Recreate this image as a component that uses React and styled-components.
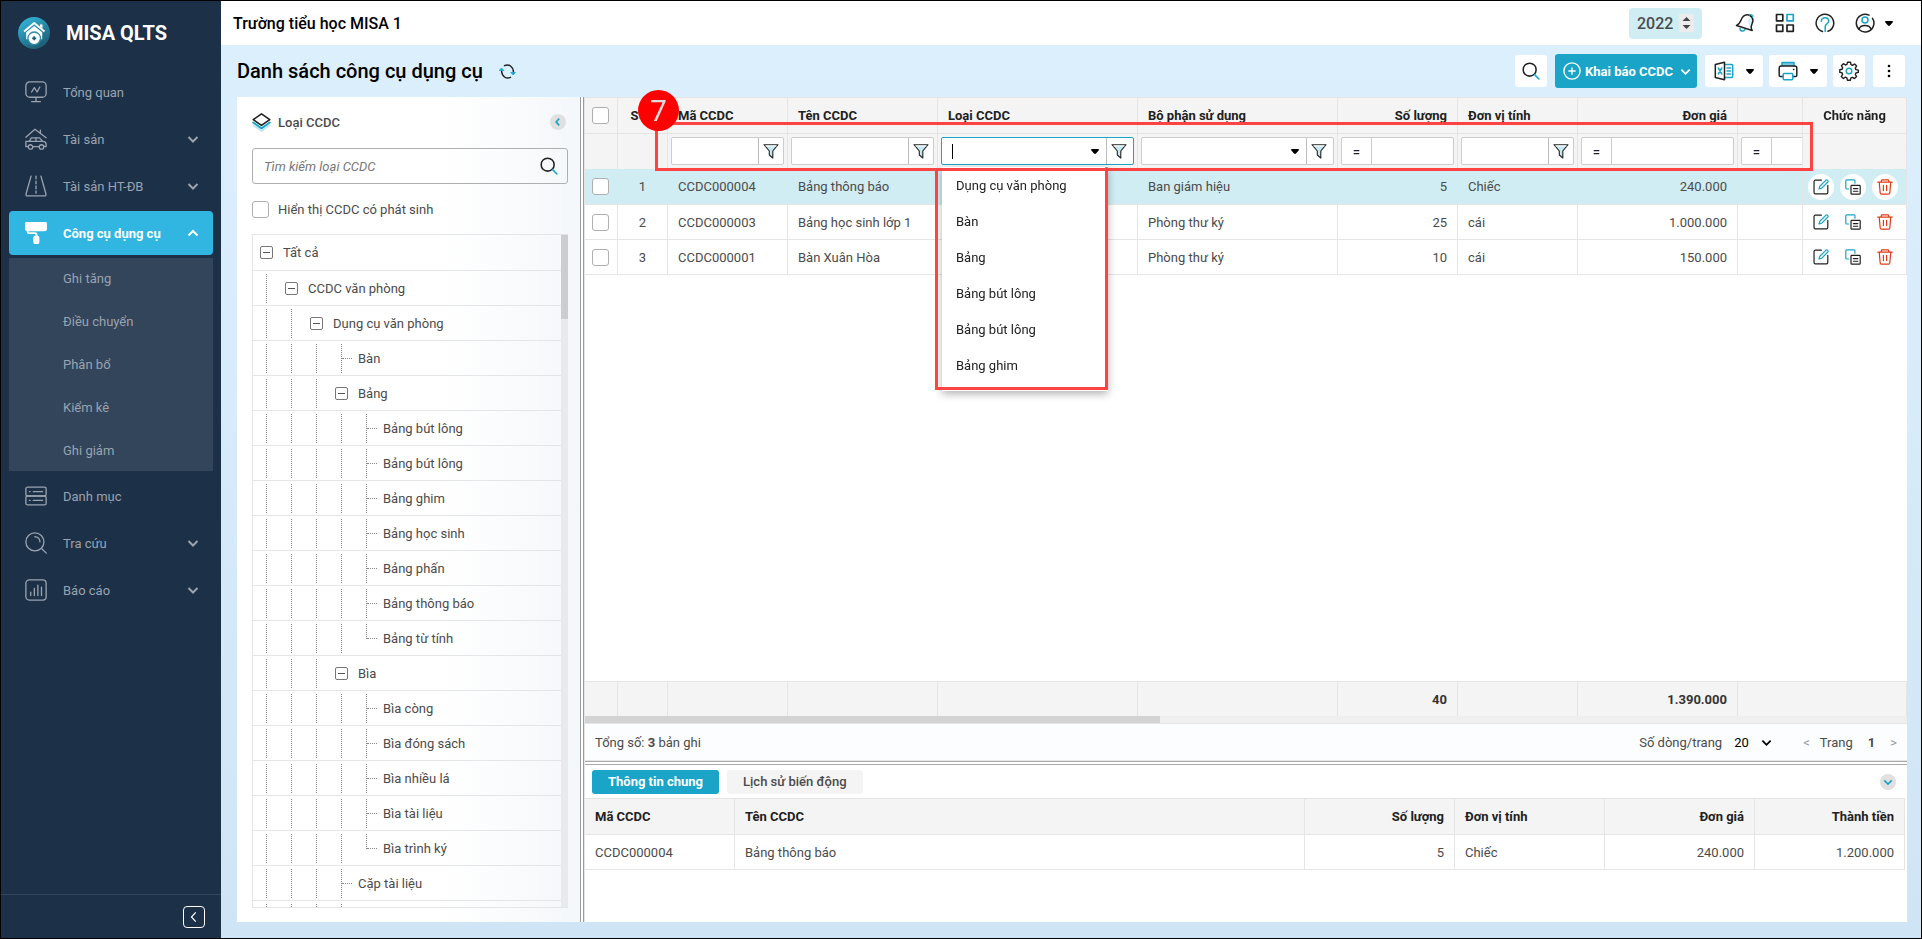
import React, { useState } from 'react';
import styled, { createGlobalStyle, css } from 'styled-components';

const teal = '#1aa4c8';
const dark = '#212121';

const MENU_TOP = [
  { label: 'Tổng quan', icon: 'monitor' },
  { label: 'Tài sản', icon: 'car', expandable: true },
  { label: 'Tài sản HT-ĐB', icon: 'road', expandable: true },
  { label: 'Công cụ dụng cụ', icon: 'roller', expandable: true, active: true },
];

const SUB_MENU = ['Ghi tăng', 'Điều chuyển', 'Phân bổ', 'Kiểm kê', 'Ghi giảm'];

const MENU_BOTTOM = [
  { label: 'Danh mục', icon: 'server' },
  { label: 'Tra cứu', icon: 'lookup', expandable: true },
  { label: 'Báo cáo', icon: 'report', expandable: true },
];

const TREE = [
  { label: 'Tất cả', level: 0, branch: true },
  { label: 'CCDC văn phòng', level: 1, branch: true },
  { label: 'Dụng cụ văn phòng', level: 2, branch: true },
  { label: 'Bàn', level: 3 },
  { label: 'Bảng', level: 3, branch: true },
  { label: 'Bảng bút lông', level: 4 },
  { label: 'Bảng bút lông', level: 4 },
  { label: 'Bảng ghim', level: 4 },
  { label: 'Bảng học sinh', level: 4 },
  { label: 'Bảng phấn', level: 4 },
  { label: 'Bảng thông báo', level: 4 },
  { label: 'Bảng từ tính', level: 4, last: true },
  { label: 'Bìa', level: 3, branch: true },
  { label: 'Bìa còng', level: 4 },
  { label: 'Bìa đóng sách', level: 4 },
  { label: 'Bìa nhiều lá', level: 4 },
  { label: 'Bìa tài liệu', level: 4 },
  { label: 'Bìa trình ký', level: 4, last: true },
  { label: 'Cặp tài liệu', level: 3 },
  { label: '', level: 3 },
];

const ROWS = [
  { code: 'CCDC000004', name: 'Bảng thông báo', dept: 'Ban giám hiệu', qty: '5', unit: 'Chiếc', price: '240.000' },
  { code: 'CCDC000003', name: 'Bảng học sinh lớp 1', dept: 'Phòng thư ký', qty: '25', unit: 'cái', price: '1.000.000' },
  { code: 'CCDC000001', name: 'Bàn Xuân Hòa', dept: 'Phòng thư ký', qty: '10', unit: 'cái', price: '150.000' },
];

const OPTIONS = ['Dụng cụ văn phòng', 'Bàn', 'Bảng', 'Bảng bút lông', 'Bảng bút lông', 'Bảng ghim'];

const COLS = [33, 50, 120, 150, 200, 200, 120, 120, 160, 160, 104];

/* ---------- icons ---------- */

const Svg = ({ size = 20, children, ...rest }) => (
  <svg
    width={size}
    height={size}
    viewBox="0 0 20 20"
    fill="none"
    stroke="currentColor"
    strokeWidth="1.5"
    strokeLinecap="round"
    strokeLinejoin="round"
    aria-hidden="true"
    {...rest}
  >
    {children}
  </svg>
);

const menuIcons = {
  monitor: (
    <Svg size={22} strokeWidth="1.2">
      <rect x="0.8" y="0.8" width="18.4" height="14" rx="3.5" />
      <path d="M6 10l2.5-4 2.5 4L13.5 5.5M10 15v3.5M6 18.7h8" />
    </Svg>
  ),
  car: (
    <Svg size={22} strokeWidth="1.2">
      <path d="M.8 8.5L9 1.2l10.2 7.6M14 2v2.6" />
      <path d="M3.8 12.2l2-3.2h7.4l3 3.2M10 9v3.2M1.2 12.2h15c1.8 0 3 1 3 2.600v2h-2M12.5 17h-5M3 17H.8v-4.800" />
      <circle cx="5" cy="17.2" r="2" />
      <circle cx="15" cy="17.2" r="2" />
    </Svg>
  ),
  road: (
    <Svg size={22} strokeWidth="1.2">
      <path d="M5.5 1L1 17c-.3 1.3.2 2 1.2 2h15.6c1 0 1.5-.7 1.2-2L14.5 1" />
      <path d="M10 1v15.5" strokeDasharray="2.5 2" />
    </Svg>
  ),
  roller: (
    <Svg size={22} strokeWidth="1.6">
      <rect x=".5" y=".5" width="19" height="7" rx="2" fill="currentColor" />
      <path d="M2.5 7.5v1.7c0 .6.5 1 1 1H9c1 0 1.5.4 1.5 1.2v2" />
      <rect x="8.3" y="13" width="4" height="6.5" rx="1.6" fill="currentColor" />
    </Svg>
  ),
  server: (
    <Svg size={22} strokeWidth="1.2">
      <rect x=".8" y="2" width="18.4" height="8" rx="1.5" />
      <rect x=".8" y="10" width="18.4" height="8" rx="1.5" />
      <path d="M4 6h.6M7.5 6H16M4 14h.6M7.5 14H16" />
    </Svg>
  ),
  lookup: (
    <Svg size={22} strokeWidth="1.2">
      <circle cx="9" cy="9" r="8.2" />
      <path d="M9 4.3a4.7 4.7 0 0 1 4.6 4.6M15 15l4.4 4.2" />
    </Svg>
  ),
  report: (
    <Svg size={22} strokeWidth="1.2">
      <rect x=".8" y=".8" width="18.4" height="18.4" rx="3" />
      <path d="M5.2 15v-3M8.5 15V8.5M11.7 15V5.5M15 15V7.5" />
    </Svg>
  ),
};

const LogoIcon = () => (
  <svg width="32" height="32" viewBox="0 0 32 32" aria-hidden="true">
    <defs>
      <linearGradient id="logo" x1="0" y1="0" x2="0.6" y2="1">
        <stop offset="0" stopColor="#35bfe6" />
        <stop offset="1" stopColor="#1d5e73" />
      </linearGradient>
    </defs>
    <circle cx="16" cy="16" r="16" fill="url(#logo)" />
    <path d="M6 14.5L16.2 6l10.3 8.5" fill="none" stroke="#fff" strokeWidth="1.8" strokeLinejoin="round" />
    <path d="M22 7.5h2.500v4L22 9.500zM8.200 15.300l8-6.300 8 6.300v7H8.200z" fill="#fff" />
    <circle cx="16.2" cy="21.3" r="6.300" fill="#fff" stroke="#2a8ba8" strokeWidth="1.300" />
    <path d="M16.2 19.300v4M14.200 21.300h4" stroke="#1d5e73" strokeWidth="1.800" />
  </svg>
);

const Chevron = ({ dir = 'down', size = 12, color = 'currentColor', width = 2 }) => {
  const paths = {
    down: 'M1.5 4L6 8.500 10.500 4',
    up: 'M1.500 8.500L6 4l4.500 4.500',
    left: 'M7.500 2L3.800 6l3.700 4',
  };
  return (
    <svg width={size} height={size} viewBox="0 0 12 12" fill="none" stroke={color} strokeWidth={width} aria-hidden="true">
      <path d={paths[dir]} />
    </svg>
  );
};

const Caret = () => (
  <svg width="8" height="5" viewBox="0 0 8 5" aria-hidden="true">
    <path d="M.8 0h6.400q1.300.4.4 1.400L5 4.500q-1 .8-2 0L.4 1.400Q-.5.4.8 0z" fill="#000" />
  </svg>
);

const SearchIcon = ({ size = 18 }) => (
  <Svg size={size} strokeWidth="1.7">
    <circle cx="8.5" cy="8.5" r="7.2" stroke={dark} />
    <path d="M14 14l4.800 4.800" stroke={teal} />
  </Svg>
);

const RefreshIcon = () => (
  <Svg size={17} strokeWidth="1.7">
    <path d="M6.500 3.200c5-2.500 10.200 1 10.500 7.300M13.500 16.800c-5 2.500-10.200-1-10.500-7.300" stroke={dark} />
    <path d="M14.300 11.200h5l-2.500 2.600zM.7 8.800h5L3.200 6.200z" stroke={teal} fill={teal} strokeWidth="1" />
  </Svg>
);

const LayersIcon = () => (
  <Svg size={19} strokeWidth="1.7">
    <path d="M1.500 13l8.500 6 8.500-6" stroke="#bfe6f2" />
    <path d="M1.200 10l8.800 6.200 8.800-6.200" stroke={teal} strokeWidth="2" />
    <path d="M10 1L1.300 7l8.700 6 8.700-6z" stroke={dark} fill="#fff" />
  </Svg>
);

const BellIcon = () => (
  <Svg size={20}>
    <path d="M5 15.500c0 3 4 3.500 5 1" stroke={teal} />
    <path d="M12.500 7l4.500-3c1 3-1 9-1.500 13z" fill="#d5f0f8" stroke="none" />
    <path d="M1.500 12.500C5 11 5.500 8 7 5c1.700-3.300 5.500-4 8-2.500C18.500 4.600 18.300 8 17 11c-1 2.300-1.500 4 .2 6.500L1.500 12.500z" stroke={dark} />
    <path d="M14.500 2.300L16 1.400l2.300 1.200-.8 1.900" stroke={teal} strokeWidth="1" />
  </Svg>
);

const AppsIcon = () => (
  <Svg size={20} strokeWidth="1.7">
    <rect x="1.5" y="1.5" width="6.3" height="6.3" stroke={dark} />
    <rect x="12" y="1.5" width="6.3" height="6.3" stroke={teal} />
    <rect x="1.5" y="12" width="6.3" height="6.3" stroke={dark} />
    <rect x="12" y="12" width="6.3" height="6.3" stroke={dark} />
  </Svg>
);

const HelpIcon = () => (
  <Svg size={20}>
    <path d="M7.500 18.500A8.800 8.800 0 1 1 13 18.300" stroke={dark} />
    <path d="M6.300 8.300c0-5 7.400-4.500 7.400-.3 0 3-3.500 2.800-3.500 5.500v5" stroke={teal} />
  </Svg>
);

const UserIcon = () => (
  <Svg size={20}>
    <path d="M14 2.200A8.800 8.800 0 1 0 17.500 5.300" stroke={dark} />
    <circle cx="10" cy="7" r="3" stroke={teal} />
    <path d="M4 16.200c1.500-5 10.500-5 12 0" stroke={dark} />
  </Svg>
);

const PlusCircle = () => (
  <Svg size={18} stroke="#fff">
    <circle cx="10" cy="10" r="9" />
    <path d="M10 6.500v7M6.500 10h7" />
  </Svg>
);

const ExcelIcon = () => (
  <Svg size={20}>
    <path d="M11 3.500h6.500c.8 0 1.200.4 1.200 1.200v10.600c0 .8-.4 1.200-1.200 1.200H11M13 7h3.500M13 10h3.500M13 13h3.500" stroke={teal} />
    <path d="M1.300 3.500L10.500 1.200v17.600L1.300 16.500z" stroke={dark} />
    <path d="M4.300 7l3.500 6M7.800 7l-3.500 6" stroke={teal} />
  </Svg>
);

const PrintIcon = () => (
  <Svg size={20}>
    <path d="M4 5V1.500h12V5" stroke={teal} fill="#7cc8dd" />
    <path d="M5 15.500H2.500c-.8 0-1.300-.5-1.300-1.300V7c0-1.200.8-2 2-2h13.600c1.200 0 2 .8 2 2v7.200c0 .8-.5 1.300-1.300 1.300H15M15.500 8.500h.3" stroke={dark} />
    <rect x="5.2" y="12.5" width="9.6" height="6.3" rx="1" stroke={teal} fill="#fff" />
  </Svg>
);

const GearIcon = () => (
  <Svg size={20} strokeWidth="1.4">
    <path
      d="M8.500 1.200h3l.5 2.400 1.500.7 2.100-1.300 2 2-1.300 2.200.6 1.400 2.400.5v2.300l-2.400.6-.6 1.500 1.300 2.100-2.100 2-2-1.300-1.600.6-.5 2.300h-3l-.5-2.300-1.500-.7L4.300 17.500l-2-2 1.300-2.200L3 11.800.8 11.400V8.800L3.100 8.300l.6-1.500L2.400 4.700l2-2 2.100 1.300 1.500-.6z"
      stroke={dark}
    />
    <circle cx="10" cy="10" r="2.8" stroke={teal} />
  </Svg>
);

const FunnelIcon = () => (
  <svg width="16" height="16" viewBox="0 0 16 16" strokeLinejoin="round" aria-hidden="true">
    <path d="M2.500 2.500L6.700 8v4l3 2.700V8l4-5.500z" fill="#c5e8f2" />
    <path d="M1 1.700h14L9.800 8v7L6.300 12V8z" fill="none" stroke={dark} strokeWidth="1.1" />
    <path d="M2.500 3h11" stroke="#fff" />
  </svg>
);

const EditIcon = () => (
  <Svg size={16} strokeWidth="1.5">
    <path d="M10.500 1.500H3c-1 0-1.700.7-1.700 1.700v13.600c0 1 .7 1.700 1.700 1.700h14c1 0 1.500-.7 1.500-1.700V8" stroke={dark} />
    <path d="M7.500 12.500l1-3.500 7.800-7.600c1.500-1 3.300.9 2.300 2.300L11 11.500z" stroke={teal} />
  </Svg>
);

const CopyIcon = () => (
  <Svg size={16} strokeWidth="1.5">
    <path d="M4.500 12.500H2.200c-.8 0-1.200-.4-1.200-1.200V2.200C1 1.400 1.400 1 2.200 1h9c.8 0 1.200.4 1.200 1.200v3" stroke={teal} />
    <rect x="7.5" y="8" width="11.5" height="11" rx="1" stroke={dark} />
    <path d="M10.500 12H16M10.500 15.300H16" stroke={dark} />
  </Svg>
);

const TrashIcon = () => (
  <Svg size={16} stroke="#e03a14" strokeWidth="1.5">
    <path d="M1 4h18M5 4l.8-2.800h8.400L15 4M2.800 4L4 17.500c.1.800.6 1.300 1.400 1.300h9.200c.8 0 1.300-.5 1.400-1.300L17.200 4M8 8v6.500M12 8v6.500" />
  </Svg>
);

/* ---------- page ---------- */

const NavEntry = ({ item }) => (
  <NavItem type="button" $active={item.active} aria-expanded={item.expandable ? !!item.active : undefined}>
    {menuIcons[item.icon]}
    <span>{item.label}</span>
    {item.expandable && <Chevron dir={item.active ? 'up' : 'down'} />}
  </NavItem>
);

const TreeItem = ({ node }) => (
  <TreeRow role="treeitem" aria-level={node.level + 1}>
    {Array.from({ length: node.level }, (_, i) => (
      <Guide key={i} />
    ))}
    {node.branch ? <Toggle type="button" aria-label={`Thu gọn ${node.label}`} /> : <Connector $last={node.last} />}
    <span>{node.label}</span>
  </TreeRow>
);

const TextFilter = ({ label, combo, focused, children }) => (
  <FilterBox $focused={focused}>
    {focused && <TextCursor />}
    <input type="text" aria-label={label} />
    {combo && (
      <ComboArrow type="button" aria-label={`Mở danh sách ${label}`}>
        <Caret />
      </ComboArrow>
    )}
    <FilterButton type="button" $wide={combo} aria-label={`Lọc ${label}`}>
      <FunnelIcon />
    </FilterButton>
    {children}
  </FilterBox>
);

const NumberFilter = ({ label }) => (
  <FilterBox>
    <Operator type="button" aria-label={`Điều kiện ${label}`}>=</Operator>
    <input type="text" aria-label={label} />
  </FilterBox>
);

const ColGroup = () => (
  <colgroup>
    {COLS.map((w, i) => (
      <col key={i} width={w} />
    ))}
  </colgroup>
);

const App = () => {
  const [year, setYear] = useState('2022');
  const [pageSize, setPageSize] = useState('20');

  return (
    <>
      <GlobalStyle />
      <Page>
        <Sidebar>
          <Brand>
            <LogoIcon />
            MISA QLTS
          </Brand>
          <Nav>
            {MENU_TOP.map((item) => (
              <NavEntry key={item.label} item={item} />
            ))}
            <SubMenu>
              {SUB_MENU.map((label) => (
                <a href="#" key={label}>{label}</a>
              ))}
            </SubMenu>
            {MENU_BOTTOM.map((item) => (
              <NavEntry key={item.label} item={item} />
            ))}
          </Nav>
          <SidebarFooter>
            <CollapseButton type="button" aria-label="Thu gọn menu">
              <Chevron dir="left" size={14} width={1} />
            </CollapseButton>
          </SidebarFooter>
        </Sidebar>

        <Main>
          <TopBar>
            <School>Trường tiểu học MISA 1</School>
            <YearBox>
              <select aria-label="Năm" value={year} onChange={(e) => setYear(e.target.value)}>
                <option>2022</option>
                <option>2021</option>
              </select>
              <Spinner>
                <svg width="9" height="12" viewBox="0 0 9 12" aria-hidden="true">
                  <path d="M4.5 0l4 4h-8zM4.5 12l4-4h-8z" fill="#444" />
                </svg>
              </Spinner>
            </YearBox>
            <TopActions>
              <IconButton type="button" aria-label="Thông báo"><BellIcon /></IconButton>
              <IconButton type="button" aria-label="Ứng dụng"><AppsIcon /></IconButton>
              <IconButton type="button" aria-label="Trợ giúp"><HelpIcon /></IconButton>
              <IconButton type="button" aria-label="Tài khoản"><UserIcon /><Caret /></IconButton>
            </TopActions>
          </TopBar>

          <Content>
            <Toolbar>
              <h1>Danh sách công cụ dụng cụ</h1>
              <IconButton type="button" aria-label="Tải lại"><RefreshIcon /></IconButton>
              <Tools>
                <ToolButton type="button" aria-label="Tìm kiếm"><SearchIcon /></ToolButton>
                <PrimaryButton type="button">
                  <PlusCircle />
                  Khai báo CCDC
                  <Chevron size={11} />
                </PrimaryButton>
                <ToolGroup>
                  <ToolButton type="button" $wide aria-label="Xuất Excel"><ExcelIcon /><Caret /></ToolButton>
                  <ToolButton type="button" $wide aria-label="In"><PrintIcon /><Caret /></ToolButton>
                  <ToolButton type="button" aria-label="Thiết lập"><GearIcon /></ToolButton>
                </ToolGroup>
                <ToolButton type="button" aria-label="Thêm">
                  <svg width="4" height="14" viewBox="0 0 4 14" fill="#000" aria-hidden="true">
                    <circle cx="2" cy="2" r="1.3" />
                    <circle cx="2" cy="7" r="1.3" />
                    <circle cx="2" cy="12" r="1.3" />
                  </svg>
                </ToolButton>
              </Tools>
            </Toolbar>

            <Workspace>
              <TypePanel>
                <PanelHead>
                  <LayersIcon />
                  <h2>Loại CCDC</h2>
                  <RoundButton type="button" aria-label="Thu gọn">
                    <Chevron dir="left" size={10} color={teal} />
                  </RoundButton>
                </PanelHead>
                <SearchBox>
                  <input type="text" placeholder="Tìm kiếm loại CCDC" aria-label="Tìm kiếm loại CCDC" />
                  <SearchIcon />
                </SearchBox>
                <CheckLabel>
                  <Checkbox type="checkbox" />
                  Hiển thị CCDC có phát sinh
                </CheckLabel>
                <Tree>
                  <TreeRows role="tree">
                    {TREE.map((node, i) => (
                      <TreeItem key={i} node={node} />
                    ))}
                  </TreeRows>
                  <TreeScroll><i /></TreeScroll>
                </Tree>
              </TypePanel>

              <SplitV />

              <GridPanel>
                <GridSection>
                  <GridScroll>
                    <DataTable>
                      <ColGroup />
                      <thead>
                        <HeadRow>
                          <th><Checkbox type="checkbox" aria-label="Chọn tất cả" /></th>
                          <Th $align="center">STT</Th>
                          <Th>Mã CCDC</Th>
                          <Th>Tên CCDC</Th>
                          <Th>Loại CCDC</Th>
                          <Th>Bộ phận sử dụng</Th>
                          <Th $align="right">Số lượng</Th>
                          <Th>Đơn vị tính</Th>
                          <Th $align="right">Đơn giá</Th>
                          <Th />
                          <Th $align="center" className="pinned">Chức năng</Th>
                        </HeadRow>
                        <FilterRow>
                          <td />
                          <td />
                          <td><TextFilter label="Mã CCDC" /></td>
                          <td><TextFilter label="Tên CCDC" /></td>
                          <td>
                            <TextFilter label="Loại CCDC" combo focused>
                              <Dropdown role="listbox">
                                {OPTIONS.map((o, i) => (
                                  <li role="option" aria-selected="false" key={i}>{o}</li>
                                ))}
                              </Dropdown>
                            </TextFilter>
                          </td>
                          <td><TextFilter label="Bộ phận sử dụng" combo /></td>
                          <td><NumberFilter label="Số lượng" /></td>
                          <td><TextFilter label="Đơn vị tính" /></td>
                          <td><NumberFilter label="Đơn giá" /></td>
                          <td><NumberFilter label="Thành tiền" /></td>
                          <td className="pinned" />
                        </FilterRow>
                      </thead>
                      <tbody>
                        {ROWS.map((row, i) => (
                          <BodyRow key={row.code} $selected={i === 0}>
                            <td><Checkbox type="checkbox" aria-label={`Chọn ${row.code}`} /></td>
                            <Td $align="center">{i + 1}</Td>
                            <Td>{row.code}</Td>
                            <Td>{row.name}</Td>
                            <Td />
                            <Td>{row.dept}</Td>
                            <Td $align="right">{row.qty}</Td>
                            <Td>{row.unit}</Td>
                            <Td $align="right">{row.price}</Td>
                            <Td />
                            <td className="pinned">
                              <RowActions>
                                <RowAction type="button" aria-label="Sửa"><EditIcon /></RowAction>
                                <RowAction type="button" aria-label="Nhân bản"><CopyIcon /></RowAction>
                                <RowAction type="button" aria-label="Xóa"><TrashIcon /></RowAction>
                              </RowActions>
                            </td>
                          </BodyRow>
                        ))}
                      </tbody>
                    </DataTable>
                  </GridScroll>

                  <SummaryWrap>
                    <DataTable>
                      <ColGroup />
                      <tbody>
                        <SummaryRow>
                          <Td />
                          <Td />
                          <Td />
                          <Td />
                          <Td />
                          <Td />
                          <Td $align="right">40</Td>
                          <Td />
                          <Td $align="right">1.390.000</Td>
                          <Td colSpan={2} />
                        </SummaryRow>
                      </tbody>
                    </DataTable>
                  </SummaryWrap>
                  <ScrollX><i /></ScrollX>

                  <Pager>
                    <span>Tổng số: <b>3</b> bản ghi</span>
                    <PageSize>
                      Số dòng/trang
                      <select value={pageSize} onChange={(e) => setPageSize(e.target.value)}>
                        <option>20</option>
                        <option>50</option>
                      </select>
                      <Chevron size={11} color="#000" width={2} />
                    </PageSize>
                    <PageNav>
                      <button type="button" aria-label="Trang trước">&lt;</button>
                      <span>Trang</span>
                      <b>1</b>
                      <button type="button" aria-label="Trang sau">&gt;</button>
                    </PageNav>
                  </Pager>

                  <StepFrame />
                  <StepBadge>7</StepBadge>
                </GridSection>

                <SplitH />

                <Detail>
                  <Tabs>
                    <Tab type="button" $active>Thông tin chung</Tab>
                    <Tab type="button">Lịch sử biến động</Tab>
                    <RoundButton type="button" aria-label="Thu gọn chi tiết">
                      <Chevron size={10} color={teal} />
                    </RoundButton>
                  </Tabs>
                  <DetailTable>
                    <colgroup>
                      <col width="150" />
                      <col />
                      <col width="150" />
                      <col width="150" />
                      <col width="150" />
                      <col width="150" />
                    </colgroup>
                    <thead>
                      <HeadRow>
                        <Th>Mã CCDC</Th>
                        <Th>Tên CCDC</Th>
                        <Th $align="right">Số lượng</Th>
                        <Th>Đơn vị tính</Th>
                        <Th $align="right">Đơn giá</Th>
                        <Th $align="right">Thành tiền</Th>
                      </HeadRow>
                    </thead>
                    <tbody>
                      <BodyRow>
                        <Td>CCDC000004</Td>
                        <Td>Bảng thông báo</Td>
                        <Td $align="right">5</Td>
                        <Td>Chiếc</Td>
                        <Td $align="right">240.000</Td>
                        <Td $align="right">1.200.000</Td>
                      </BodyRow>
                    </tbody>
                  </DetailTable>
                </Detail>
              </GridPanel>
            </Workspace>
          </Content>
        </Main>
      </Page>
    </>
  );
};

// Styled components
const GlobalStyle = createGlobalStyle`
  *, *::before, *::after {
    box-sizing: border-box;
  }

  body {
    margin: 0;
    font-family: Roboto, "Liberation Sans", sans-serif;
    font-size: 13px;
    color: #4b4b4b;
  }

  button, input, select {
    font: inherit;
    color: inherit;
    margin: 0;
  }

  button {
    padding: 0;
    border: none;
    background: none;
    cursor: pointer;
  }

  svg {
    display: block;
    flex: none;
  }
`;

const Page = styled.div`
  display: flex;
  height: 100vh;
  border: 1px solid #000;
  overflow: hidden;
`;

const Sidebar = styled.aside`
  flex: 0 0 220px;
  display: flex;
  flex-direction: column;
  background: #1c3048;
  color: #9aa3af;
`;

const Brand = styled.div`
  display: flex;
  align-items: center;
  gap: 16px;
  height: 64px;
  padding-left: 17px;
  font-size: 20px;
  font-weight: 700;
  color: #fff;
`;

const Nav = styled.nav`
  flex: 1;
  display: flex;
  flex-direction: column;
  gap: 3px;
  padding: 5px 8px;
`;

const NavItem = styled.button`
  display: flex;
  align-items: center;
  gap: 16px;
  height: 44px;
  padding: 0 14px 0 16px;
  border-radius: 4px;
  text-align: left;

  span {
    flex: 1;
  }

  ${({ $active }) => $active && css`
    background: #30b6e0;
    color: #fff;
    font-weight: 700;
  `}
`;

const SubMenu = styled.div`
  display: flex;
  flex-direction: column;
  background: #33455b;

  a {
    height: 43px;
    padding-left: 54px;
    line-height: 41px;
    color: inherit;
    text-decoration: none;
  }

  a:last-child {
    height: 41px;
  }
`;

const SidebarFooter = styled.div`
  display: flex;
  justify-content: flex-end;
  align-items: center;
  height: 44px;
  padding-right: 16px;
  border-top: 1px solid #33455b;
`;

const CollapseButton = styled.button`
  display: flex;
  align-items: center;
  justify-content: center;
  width: 22px;
  height: 22px;
  border: 1px solid #fff;
  border-radius: 4px;
  color: #fff;
`;

const Main = styled.main`
  flex: 1;
  min-width: 0;
  display: flex;
  flex-direction: column;
`;

const TopBar = styled.header`
  display: flex;
  align-items: center;
  flex: 0 0 44px;
  padding: 0 28px 0 12px;
  background: #fff;
`;

const School = styled.div`
  flex: 1;
  font-size: 16px;
  font-weight: 500;
  color: #000;
`;

const YearBox = styled.label`
  display: flex;
  align-items: center;
  gap: 6px;
  height: 31px;
  padding: 0 8px;
  margin-right: 33px;
  border-radius: 4px;
  background: #d0edf3;

  select {
    appearance: none;
    width: 36px;
    padding: 0;
    border: none;
    background: none;
    font-size: 16px;
    font-weight: 500;
  }
`;

const Spinner = styled.span`
  display: flex;
  align-items: center;
  justify-content: center;
  width: 15px;
  height: 18px;
  background: #ececec;
`;

const TopActions = styled.div`
  display: flex;
  gap: 20px;
`;

const IconButton = styled.button`
  display: flex;
  align-items: center;
  gap: 10px;
`;

const Content = styled.section`
  flex: 1;
  min-height: 0;
  display: flex;
  flex-direction: column;
  padding: 9px 14px 16px 16px;
  background: linear-gradient(180deg, #dceffd, #cfe5f5);
`;

const Toolbar = styled.div`
  display: flex;
  align-items: center;
  gap: 16px;
  flex: 0 0 34px;
  margin-bottom: 9px;

  h1 {
    margin: 0;
    font-size: 20px;
    font-weight: 500;
    color: #000;
  }
`;

const Tools = styled.div`
  display: flex;
  align-items: center;
  gap: 8px;
  margin-left: auto;
  padding-right: 2px;
`;

const ToolGroup = styled.div`
  display: flex;
  gap: 6px;
`;

const ToolButton = styled.button`
  display: flex;
  align-items: center;
  justify-content: center;
  gap: 12px;
  width: ${({ $wide }) => ($wide ? '58px' : '32px')};
  height: 32px;
  border-radius: 3px;
  background: #fff;
`;

const PrimaryButton = styled.button`
  display: flex;
  align-items: center;
  gap: 4px;
  height: 34px;
  padding: 0 6px 0 8px;
  border-radius: 3px;
  background: ${teal};
  color: #fff;
  font-weight: 700;

  svg:last-child {
    margin-left: 3px;
  }
`;

const Workspace = styled.div`
  flex: 1;
  min-height: 0;
  display: flex;
`;

const TypePanel = styled.section`
  flex: 0 0 343px;
  display: flex;
  flex-direction: column;
  padding: 14px 12px 14px 15px;
  background: linear-gradient(90deg, #fff 60%, #f4f7fa);
`;

const PanelHead = styled.div`
  display: flex;
  align-items: center;
  gap: 7px;
  height: 22px;
  margin-bottom: 15px;
  padding-right: 2px;

  h2 {
    flex: 1;
    margin: 0;
    font-size: 13px;
    font-weight: 500;
  }
`;

const RoundButton = styled.button`
  display: flex;
  align-items: center;
  justify-content: center;
  width: 16px;
  height: 16px;
  border-radius: 50%;
  background: #e0e0e0;
`;

const SearchBox = styled.div`
  display: flex;
  align-items: center;
  flex: 0 0 36px;
  padding: 0 9px 0 11px;
  border: 1px solid #afafaf;
  border-radius: 3px;

  input {
    flex: 1;
    border: none;
    outline: none;
    padding: 0;
    background: none;
  }

  input::placeholder {
    font-style: italic;
    color: #777;
  }
`;

const CheckLabel = styled.label`
  display: flex;
  align-items: center;
  gap: 9px;
  flex: 0 0 50px;
`;

const Checkbox = styled.input`
  appearance: none;
  display: block;
  width: 17px;
  height: 17px;
  margin: 0;
  border: 1px solid #afafaf;
  border-radius: 3px;
  background: #fff;
`;

const Tree = styled.div`
  flex: 1;
  min-height: 0;
  display: flex;
  border: 1px solid #e4e5e7;
  border-right: none;
`;

const TreeRows = styled.div`
  flex: 1;
  overflow: hidden;
`;

const TreeRow = styled.div`
  display: flex;
  align-items: center;
  height: 35px;
  border-bottom: 1px solid #e4e5e7;

  &:first-child {
    height: 36px;
  }
`;

const Guide = styled.i`
  width: 12px;
  height: 29px;
  margin-left: 13px;
  border-left: 1px dotted #888;
`;

const Connector = styled.i`
  display: flex;
  align-items: center;
  width: 17px;
  height: 29px;
  margin-left: 13px;
  border-left: 1px dotted #888;

  &::after {
    content: '';
    width: 10px;
    border-top: 1px dotted #888;
  }

  ${({ $last }) => $last && css`
    align-self: flex-start;
    align-items: flex-end;
    height: 15px;
    margin-top: 3px;
  `}
`;

const Toggle = styled.button`
  display: flex;
  align-items: center;
  justify-content: center;
  width: 13px;
  height: 13px;
  margin: 0 10px 0 7px;
  border: 1px solid #777;
  border-radius: 2px;

  &::after {
    content: '';
    width: 7px;
    height: 1px;
    background: #555;
  }
`;

const TreeScroll = styled.div`
  flex: 0 0 7px;
  background: #e8eaec;

  i {
    display: block;
    height: 84px;
    background: #cbcdcf;
  }
`;

const SplitV = styled.div`
  flex: 0 0 4px;
  border: 1px solid #9a9da0;
  border-width: 0 1px;
  background: #fff;
`;

const GridPanel = styled.section`
  flex: 1;
  min-width: 0;
  display: flex;
  flex-direction: column;
  border-left: 1px solid #e5e5e5;
  background: #fff;
`;

const GridSection = styled.div`
  position: relative;
  flex: 1;
  min-height: 0;
  display: flex;
  flex-direction: column;
`;

const GridScroll = styled.div`
  flex: 1;
  overflow: hidden;
`;

const cellAlign = css`
  padding: 0 10px;
  text-align: ${({ $align }) => $align || 'left'};
`;

const Th = styled.th`
  && {
    ${cellAlign}
  }
`;

const Td = styled.td`
  && {
    ${cellAlign}
  }
`;

const DataTable = styled.table`
  width: 1417px;
  table-layout: fixed;
  border-collapse: separate;
  border-spacing: 0;
  white-space: nowrap;

  th, td {
    padding: 0;
    border-right: 1px solid #e5e5e5;
    border-bottom: 1px solid #e5e5e5;
  }

  ${Checkbox} {
    margin-left: 7px;
  }

  .pinned {
    position: sticky;
    right: 0;
    z-index: 1;
    background: inherit;
    box-shadow: -1px 0 0 #e5e5e5;
  }
`;

const HeadRow = styled.tr`
  height: 37px;
  background: #f4f4f4;
  color: #212121;

  th {
    border-top: 1px solid #e5e5e5;
    font-weight: 700;
  }
`;

const FilterRow = styled.tr`
  height: 35px;
  background: #f4f4f4;

  td {
    padding: 3px 3px 4px;
    border-bottom: none;
  }
`;

const BodyRow = styled.tr`
  height: ${({ $selected }) => ($selected ? '36px' : '35px')};
  background: ${({ $selected }) => ($selected ? '#d0edf3' : '#fff')};

  --action-bg: ${({ $selected }) => ($selected ? '#fff' : 'transparent')};
`;

const SummaryWrap = styled.div`
  overflow: hidden;
  border-right: 1px solid #e5e5e5;
`;

const SummaryRow = styled.tr`
  height: 35px;
  background: #f4f4f4;
  color: #333;
  font-weight: 700;

  td {
    border-top: 1px solid #e5e5e5;
    border-bottom: none;
  }
`;

const FilterBox = styled.div`
  position: relative;
  display: flex;
  align-items: stretch;
  height: 28px;
  border: 1px solid ${({ $focused }) => ($focused ? teal : '#ccc')};
  border-radius: 2px;
  background: #fff;

  input {
    flex: 1;
    min-width: 0;
    border: none;
    outline: none;
    padding: 0 8px;
    background: none;
  }
`;

const TextCursor = styled.i`
  align-self: center;
  width: 1px;
  height: 15px;
  margin-left: 10px;
  background: #000;
`;

const ComboArrow = styled.button`
  display: flex;
  align-items: center;
  padding: 0 7px;
`;

const FilterButton = styled.button`
  display: flex;
  align-items: center;
  justify-content: center;
  width: ${({ $wide }) => ($wide ? '27px' : '25px')};
  padding-right: ${({ $wide }) => ($wide ? '2px' : '0')};
  border-left: 1px solid #bbb;
`;

const Operator = styled.button`
  width: 30px;
  border-right: 1px solid #ccc;
  color: #212121;
  font-weight: 500;
`;

const Dropdown = styled.ul`
  position: absolute;
  top: 29px;
  left: 0;
  z-index: 2;
  width: 166px;
  margin: 0;
  padding: 0 0 8px;
  list-style: none;
  background: #fff;
  color: #212121;
  border-right: 3px solid #999;
  border-image: linear-gradient(#999 62%, #fff 62%) 1;
  box-shadow: 0 3px 8px rgba(0, 0, 0, 0.3);

  li {
    height: 36px;
    padding-left: 14px;
    line-height: 38px;
  }

  &::after {
    content: '';
    position: absolute;
    top: 1px;
    left: -7px;
    right: -3px;
    bottom: 1px;
    border: 3px solid #ff4242;
  }
`;

const RowActions = styled.div`
  display: flex;
  justify-content: center;
  gap: 6px;
  padding-right: 3px;
`;

const RowAction = styled.button`
  display: flex;
  align-items: center;
  justify-content: center;
  width: 26px;
  height: 26px;
  border-radius: 50%;
  background: var(--action-bg);
`;

const ScrollX = styled.div`
  flex: 0 0 8px;
  background: #efefef;
  border-bottom: 1px solid #e5e5e5;

  i {
    display: block;
    width: 575px;
    height: 7px;
    background: #d3d3d3;
  }
`;

const Pager = styled.footer`
  display: flex;
  align-items: center;
  flex: 0 0 37px;
  padding: 0 10px;
  border-bottom: 1px solid #e5e5e5;
  background: #fcfdfe;
`;

const PageSize = styled.label`
  display: flex;
  align-items: center;
  margin-left: auto;

  select {
    appearance: none;
    width: 27px;
    margin-left: 12px;
    padding: 0;
    border: none;
    background: none;
    color: #000;
  }
`;

const PageNav = styled.div`
  display: flex;
  align-items: center;
  margin-left: 31px;

  button {
    color: #999;
  }

  span {
    margin: 0 15px 0 10px;
  }

  b {
    margin-right: 15px;
  }
`;

const StepFrame = styled.div`
  position: absolute;
  top: 25px;
  left: 70px;
  right: 94px;
  z-index: 3;
  height: 49px;
  border: 3px solid #ff4242;
  pointer-events: none;
`;

const StepBadge = styled.div`
  position: absolute;
  top: -7px;
  left: 53px;
  z-index: 4;
  width: 41px;
  height: 41px;
  border-radius: 50%;
  background: #fe0000;
  color: #ddd;
  font-size: 30px;
  line-height: 41px;
  text-align: center;
`;

const SplitH = styled.div`
  flex: 0 0 4px;
  border: 1px solid #aaa;
  border-width: 1px 0;
`;

const Detail = styled.section`
  flex: 0 0 157px;
`;

const Tabs = styled.div`
  display: flex;
  align-items: center;
  gap: 8px;
  height: 33px;
  padding: 0 11px 0 7px;

  ${RoundButton} {
    margin-left: auto;
  }
`;

const Tab = styled.button`
  height: 24px;
  padding: 0 16px;
  border-radius: 3px;
  background: ${({ $active }) => ($active ? teal : '#f4f4f4')};
  color: ${({ $active }) => ($active ? '#fff' : 'inherit')};
  font-weight: ${({ $active }) => ($active ? 700 : 500)};
`;

const DetailTable = styled(DataTable)`
  width: calc(100% - 2px);
`;

export default App;
